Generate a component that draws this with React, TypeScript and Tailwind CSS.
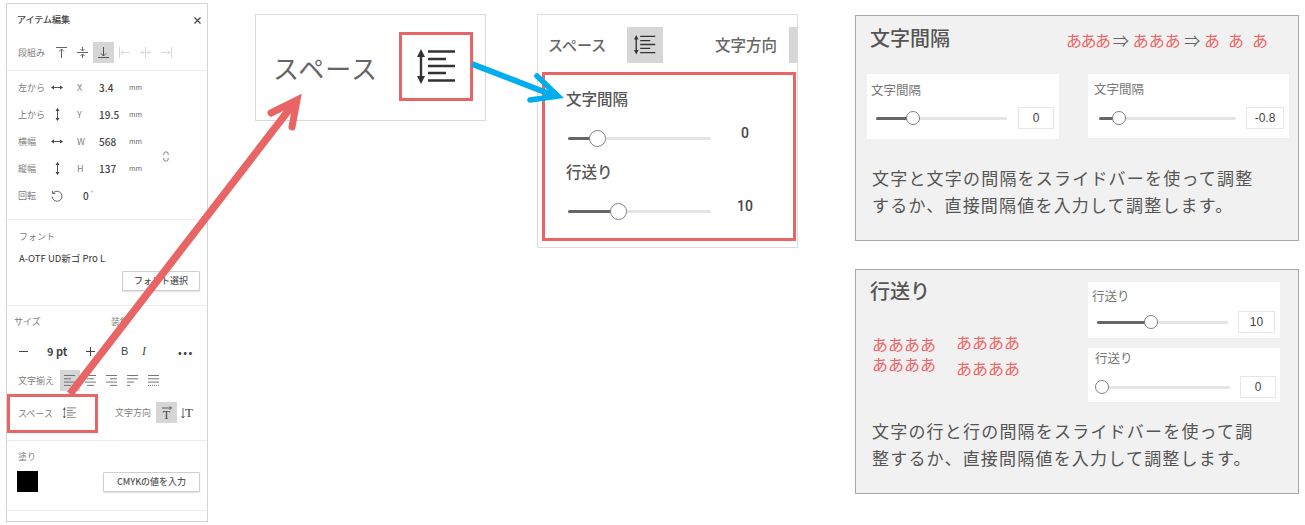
import React from "react";

const FONT = "font-['Noto_Sans_CJK_JP','Noto_Sans',sans-serif]";

function Svg({ w, h, children, className = "" }: { w: number; h: number; children: React.ReactNode; className?: string }) {
  return (
    <svg width={w} height={h} viewBox={`0 0 ${w} ${h}`} fill="none" stroke="currentColor" className={`shrink-0 ${className}`}>
      {children}
    </svg>
  );
}

function ArrowsH({ w = 12 }: { w?: number }) {
  return (
    <Svg w={w} h={7}>
      <path d={`M2 3.5H${w - 2}`} strokeWidth="0.9" />
      <path d="M0 3.5L3 1.5V5.5Z" fill="currentColor" stroke="none" />
      <path d={`M${w} 3.5L${w - 3} 1.5V5.5Z`} fill="currentColor" stroke="none" />
    </Svg>
  );
}

function ArrowsV({ h = 13 }: { h?: number }) {
  return (
    <Svg w={7} h={h}>
      <path d={`M3.5 2V${h - 2}`} strokeWidth="0.9" />
      <path d="M3.5 0L1.5 3H5.5Z" fill="currentColor" stroke="none" />
      <path d={`M3.5 ${h}L1.5 ${h - 3}H5.5Z`} fill="currentColor" stroke="none" />
    </Svg>
  );
}

function VAlign({ kind }: { kind: "top" | "mid" | "bottom" }) {
  return (
    <Svg w={13} h={13}>
      {kind === "top" && <path d="M1 1.5H12M6.5 12V3M4 5.5L6.5 3L9 5.5" strokeWidth="0.9" />}
      {kind === "mid" && <path d="M1 6.5H12M6.5 1V4.5M4.5 3L6.5 5L8.5 3M6.5 12V8.5M4.5 10L6.5 8L8.5 10" strokeWidth="0.9" />}
      {kind === "bottom" && <path d="M1 11.5H12M6.5 1V10M4 7.5L6.5 10L9 7.5" strokeWidth="0.9" />}
    </Svg>
  );
}

function HAlign({ kind }: { kind: "left" | "mid" | "right" }) {
  return (
    <Svg w={13} h={13}>
      {kind === "left" && <path d="M1.5 1V12M12 6.5H3M5.5 4L3 6.5L5.5 9" strokeWidth="0.9" />}
      {kind === "mid" && <path d="M6.5 1V12M1 6.5H4.5M3 4.5L5 6.5L3 8.5M12 6.5H8.5M10 4.5L8 6.5L10 8.5" strokeWidth="0.9" />}
      {kind === "right" && <path d="M11.5 1V12M1 6.5H10M7.5 4L10 6.5L7.5 9" strokeWidth="0.9" />}
    </Svg>
  );
}

function TextLines({ lines, dotted }: { lines: [number, number][]; dotted?: boolean }) {
  return (
    <Svg w={12} h={11}>
      {lines.map(([a, b], i) => (
        <path
          key={i}
          d={`M${a} ${0.5 + i * 3.3}H${b}`}
          strokeWidth="0.9"
          strokeDasharray={dotted && i === lines.length - 1 ? "1 1" : undefined}
        />
      ))}
    </Svg>
  );
}

function LineSpacing({ scale, stroke }: { scale: number; stroke: number }) {
  return (
    <svg width={39 * scale} height={35 * scale} viewBox="0 0 39 35" fill="none" stroke="currentColor" className="shrink-0">
      <path d="M4 6V29" strokeWidth={stroke} />
      <path d="M4 0L0 8H8Z" fill="currentColor" stroke="none" />
      <path d="M4 35L0 27H8Z" fill="currentColor" stroke="none" />
      <path d="M11 2.5H38M11 10H29M11 17H38M11 24H29M11 31.5H38" strokeWidth={stroke} />
    </svg>
  );
}

function Label({ children, className = "" }: { children: React.ReactNode; className?: string }) {
  return <span className={`text-[9px] leading-[14px] text-[#808080] whitespace-nowrap ${className}`}>{children}</span>;
}

function PosRow({ label, icon, axis, value, unit = "mm" }: { label: string; icon: React.ReactNode; axis: string; value: string; unit?: string }) {
  return (
    <div className="flex h-[27px] items-center">
      <Label className="w-[30px]">{label}</Label>
      <span className="flex w-[18px] justify-center text-[#444]">{icon}</span>
      <span className="ml-[11px] w-[22px] text-[9px] text-[#808080]">{axis}</span>
      <span className="w-[30px] text-[10px] font-medium text-[#444]">{value}</span>
      <span className="text-[7px] text-[#666]">{unit}</span>
    </div>
  );
}

function OutlineButton({ children, className = "" }: { children: React.ReactNode; className?: string }) {
  return (
    <div className={`flex h-[20px] items-center justify-center rounded-[1px] border border-[#cfcfcf] bg-white text-[9px] font-medium text-[#555] shadow-[0_1px_1px_rgba(0,0,0,0.12)] ${className}`}>
      {children}
    </div>
  );
}

function Panel() {
  return (
    <div className="absolute left-[6px] top-[3px] flex h-[519px] w-[202px] flex-col border border-[#d4d4d4] bg-white">
      <div className="h-[67px] border-b border-[#ececec]">
        <div className="flex h-[32px] items-center justify-between pl-[10px] pr-[5px]">
          <span className="text-[9px] font-medium leading-[14px] text-[#444]">アイテム編集</span>
          <span className="flex w-[10px] justify-center text-[#444]">
            <Svg w={7} h={7}>
              <path d="M0.5 0.5L6.5 6.5M6.5 0.5L0.5 6.5" strokeWidth="1.2" />
            </Svg>
          </span>
        </div>
        <div className="mt-[6px] flex h-[21px] items-center pl-[11px]">
          <Label className="w-[33px]">段組み</Label>
          <span className="flex w-[21px] justify-center text-[#555]"><VAlign kind="top" /></span>
          <span className="flex w-[21px] justify-center text-[#555]"><VAlign kind="mid" /></span>
          <span className="flex h-[21px] w-[21px] items-center justify-center bg-[#d6d6d6] text-[#444]"><VAlign kind="bottom" /></span>
          <span className="flex w-[21px] justify-center text-[#d2d2d2]"><HAlign kind="left" /></span>
          <span className="flex w-[21px] justify-center text-[#d2d2d2]"><HAlign kind="mid" /></span>
          <span className="flex w-[21px] justify-center text-[#d2d2d2]"><HAlign kind="right" /></span>
        </div>
      </div>

      <div className="flex h-[149px] border-b border-[#ececec] pl-[11px] pt-[3px]">
        <div className="w-[145px] shrink-0">
          <PosRow label="左から" icon={<ArrowsH />} axis="X" value="3.4" />
          <PosRow label="上から" icon={<ArrowsV />} axis="Y" value="19.5" />
          <PosRow label="横幅" icon={<ArrowsH />} axis="W" value="568" />
          <PosRow label="縦幅" icon={<ArrowsV />} axis="H" value="137" />
          <div className="flex h-[27px] items-center">
            <Label className="w-[30px]">回転</Label>
            <span className="flex w-[18px] justify-center text-[#555]">
              <Svg w={12} h={12}>
                <path d="M2.2 3A5 5 0 1 1 1 6.5" strokeWidth="0.9" />
                <path d="M1.5 0.8V3.4H4.2" strokeWidth="0.9" />
              </Svg>
            </span>
            <span className="ml-[17px] text-[10px] font-medium text-[#444]">0</span>
            <span className="mb-[5px] ml-[2px] text-[7px] text-[#666]">°</span>
          </div>
        </div>
        <span className="mt-[77px] text-[#666]">
          <Svg w={6} h={11}>
            <path d="M0.8 4V3A2.2 2.2 0 0 1 5.2 3V4M0.8 7V8A2.2 2.2 0 0 0 5.2 8V7" strokeWidth="0.8" />
          </Svg>
        </span>
      </div>

      <div className="flex h-[86px] flex-col border-b border-[#ececec] pl-[12px] pr-[7px] pt-[10px]">
        <Label>フォント</Label>
        <span className="mt-[7px] text-[9.5px] font-normal leading-[14px] text-[#333]">A-OTF UD新ゴ Pro L</span>
        <OutlineButton className="mt-[6px] w-[78px] self-end">フォント選択</OutlineButton>
      </div>

      <div className="h-[135px] border-b border-[#ececec] pt-[9px]">
        <div className="flex pl-[7px]">
          <Label className="w-[97px]">サイズ</Label>
          <Label>装飾</Label>
        </div>
        <div className="mt-[15px] flex h-[14px] items-center text-[#444]">
          <span className="ml-[12px] w-[28px]">
            <Svg w={9} h={9}><path d="M0 4.5H9" strokeWidth="1" /></Svg>
          </span>
          <span className="w-[39px] text-[11px] font-bold">9 pt</span>
          <span className="w-[35px]">
            <Svg w={9} h={9}><path d="M0 4.5H9M4.5 0V9" strokeWidth="1" /></Svg>
          </span>
          <span className="w-[21px] font-['Liberation_Sans',sans-serif] text-[11px]">B</span>
          <span className="w-[36px] font-['Liberation_Serif',serif] text-[12px] italic">I</span>
          <span className="text-[10px] font-bold tracking-[1.5px]">•••</span>
        </div>
        <div className="mt-[12px] flex h-[21px] items-center pl-[11px] text-[#666]">
          <Label className="w-[42px]">文字揃え</Label>
          <span className="flex h-[21px] w-[20px] items-center justify-center bg-[#d6d6d6]"><TextLines lines={[[0, 11], [0, 7], [0, 11], [0, 7]]} /></span>
          <span className="flex w-[21px] justify-center"><TextLines lines={[[0, 11], [2, 9], [0, 11], [2, 9]]} /></span>
          <span className="flex w-[21px] justify-center"><TextLines lines={[[0, 11], [4, 11], [0, 11], [4, 11]]} /></span>
          <span className="flex w-[21px] justify-center"><TextLines lines={[[0, 11], [0, 11], [0, 7], [0, 3]]} /></span>
          <span className="flex w-[21px] justify-center"><TextLines lines={[[0, 11], [0, 11], [0, 11], [0, 11]]} dotted /></span>
        </div>
        <div className="mt-[11px] flex h-[21px] items-center pl-[11px] text-[#555]">
          <Label className="mt-[3px] w-[44px] shrink-0">スペース</Label>
          <span className="flex w-[16px] shrink-0 justify-center"><LineSpacing scale={0.34} stroke={2.2} /></span>
          <Label className="ml-[37px] w-[41px] shrink-0">文字方向</Label>
          <span className="flex h-[21px] w-[21px] shrink-0 flex-col items-center justify-center bg-[#d6d6d6] text-[#444]">
            <Svg w={10} h={4}><path d="M0 2H9.5M7.5 0.5L9.5 2L7.5 3.5" strokeWidth="0.8" /></Svg>
            <span className="font-['Liberation_Serif',serif] text-[12px] leading-[10px]">T</span>
          </span>
          <span className="ml-[4px] flex items-center text-[#444]">
            <Svg w={4} h={12}><path d="M2 1V11M0.5 9L2 11L3.5 9" strokeWidth="0.8" /></Svg>
            <span className="font-['Liberation_Serif',serif] text-[13px] leading-none">T</span>
          </span>
        </div>
      </div>

      <div className="h-[70px] border-b border-[#ececec] pl-[10px] pr-[7px] pt-[9px]">
        <Label className="ml-[1px] block">塗り</Label>
        <div className="mt-[7px] flex items-center justify-between">
          <div className="h-[21px] w-[21px] bg-black" />
          <OutlineButton className="w-[97px]">CMYKの値を入力</OutlineButton>
        </div>
      </div>
    </div>
  );
}

function Slider({ width, pos, thumb }: { width: number; pos: number; thumb: number }) {
  return (
    <div className="relative flex shrink-0 items-center" style={{ width, height: thumb }}>
      <div className="h-[3px] w-full rounded-full bg-[#e4e4e4]" />
      <div className="absolute left-0 h-[3px] rounded-full bg-[#666]" style={{ width: pos }} />
      <div
        className="absolute rounded-full border-[1.5px] border-[#808080] bg-white"
        style={{ left: pos - thumb / 2, width: thumb, height: thumb }}
      />
    </div>
  );
}

function MiniBox({
  className,
  label,
  trackClass,
  width,
  pos,
  value,
  inputClass,
}: {
  className: string;
  label: string;
  trackClass: string;
  width: number;
  pos: number;
  value: string;
  inputClass: string;
}) {
  return (
    <div className={`flex flex-col bg-white ${className}`}>
      <span className="text-[12.5px] leading-[16px] text-[#777]">{label}</span>
      <div className={`flex items-center ${trackClass}`}>
        <Slider width={width} pos={pos} thumb={14} />
        <div className={`flex h-[22px] items-center justify-center border border-[#e6e6e6] font-['Liberation_Sans',sans-serif] text-[12px] text-[#444] ${inputClass}`}>
          {value}
        </div>
      </div>
    </div>
  );
}

function Paragraph({ lines, className = "" }: { lines: string[]; className?: string }) {
  return (
    <p className={`pl-[16px] text-[17px] leading-[27px] tracking-[1.2px] whitespace-nowrap text-[#555] ${className}`}>
      {lines.map((l) => (
        <span className="block" key={l}>{l}</span>
      ))}
    </p>
  );
}

export default function App() {
  return (
    <div className={`relative h-[525px] w-[1305px] overflow-hidden bg-white ${FONT}`}>
      <Panel />

      <div className="absolute left-[255px] top-[14px] flex h-[107px] w-[231px] items-center border border-[#d9d9d9] bg-white pl-[17px]">
        <span className="w-[126px] shrink-0 text-[26px] font-normal leading-none tracking-[1px] whitespace-nowrap text-[#666]">スペース</span>
        <div className="mt-[-3px] flex h-[69px] w-[74px] shrink-0 items-center justify-center border-[3px] border-[#e96464] text-[#333]">
          <LineSpacing scale={1} stroke={2.4} />
        </div>
      </div>

      <div className="absolute left-[537px] top-[14px] h-[234px] w-[261px] overflow-hidden border border-[#dcdcdc] bg-white">
        <div className="mt-[12px] flex h-[36px] items-center pl-[10px] whitespace-nowrap">
          <span className="w-[79px] shrink-0 text-[15px] font-medium text-[#666]">スペース</span>
          <span className="flex h-[36px] w-[36px] shrink-0 items-center justify-center bg-[#d6d6d6] text-[#333]">
            <LineSpacing scale={0.56} stroke={2.4} />
          </span>
          <span className="ml-[52px] w-[74px] shrink-0 text-[15.5px] font-medium text-[#666]">文字方向</span>
          <span className="h-[36px] w-[20px] shrink-0 bg-[#d6d6d6]" />
        </div>
        <div className="ml-[4px] mt-[9px] h-[169px] w-[254px] border-[3px] border-[#e96464] pl-[23px] pt-[12px]">
          <div className="ml-[-2px] text-[15.5px] font-medium leading-[22px] text-[#555]">文字間隔</div>
          <div className="mt-[21px] flex h-[18px] items-start">
            <Slider width={143} pos={29} thumb={17} />
            <span className="mt-[-6px] w-[68px] text-center font-['Roboto',sans-serif] text-[14px] font-medium leading-[18px] text-[#444]">0</span>
          </div>
          <div className="ml-[-2px] mt-[12px] text-[15.5px] font-medium leading-[22px] text-[#555]">行送り</div>
          <div className="mt-[21px] flex h-[18px] items-start">
            <Slider width={143} pos={50} thumb={17} />
            <span className="mt-[-6px] w-[68px] text-center font-['Roboto',sans-serif] text-[14px] font-medium leading-[18px] text-[#444]">10</span>
          </div>
        </div>
      </div>

      <div className="absolute left-[855px] top-[15px] h-[226px] w-[444px] border border-[#a8a8a8] bg-[#f1f1f1]">
        <div className="mt-[7px] flex h-[30px] items-center pl-[14px] whitespace-nowrap">
          <span className="w-[196px] shrink-0 text-[20px] font-medium leading-[30px] text-[#555]">文字間隔</span>
          <span className="mt-[4px] text-[16px] leading-[24px] text-[#ee6464]">
            <span className="tracking-[-1.5px]">あああ</span>
            <span className="text-[#666]"> ⇒ </span>
            <span>あああ</span>
            <span className="text-[#666]"> ⇒ </span>
            <span className="tracking-[8px]">あああ</span>
          </span>
        </div>
        <div className="mt-[21px] flex items-start gap-[29px] pl-[11px]">
          <MiniBox
            className="h-[65px] w-[192px] pl-[4px] pt-[8px]"
            label="文字間隔"
            trackClass="mt-[9px] pl-[5px]"
            width={131}
            pos={37}
            value="0"
            inputClass="ml-[11px] w-[36px]"
          />
          <MiniBox
            className="h-[64px] w-[201px] pl-[6px] pt-[7px]"
            label="文字間隔"
            trackClass="mt-[10px] pl-[5px]"
            width={137}
            pos={20}
            value="-0.8"
            inputClass="ml-[10px] w-[38px]"
          />
        </div>
        <Paragraph className="mt-[25px]" lines={["文字と文字の間隔をスライドバーを使って調整", "するか、直接間隔値を入力して調整します。"]} />
      </div>

      <div className="absolute left-[855px] top-[269px] h-[225px] w-[444px] border border-[#a8a8a8] bg-[#f1f1f1]">
        <div className="flex">
          <div className="w-[232px] shrink-0 pl-[14px] pt-[6px]">
            <div className="text-[20px] font-medium leading-[30px] text-[#555]">行送り</div>
            <div className="mt-[26px] flex pl-[2px] text-[16px] text-[#ee6464] whitespace-nowrap">
              <div className="w-[84px] pt-[2px] leading-[20px]">
                <div>ああああ</div>
                <div>ああああ</div>
              </div>
              <div className="mt-[-3px] leading-[26px]">
                <div>ああああ</div>
                <div>ああああ</div>
              </div>
            </div>
          </div>
          <div className="flex flex-col gap-[10px] pt-[12px]">
            <MiniBox
              className="h-[56px] w-[192px] pl-[4px] pt-[6px]"
              label="行送り"
              trackClass="mt-[7px] pl-[5px]"
              width={131}
              pos={54}
              value="10"
              inputClass="ml-[10px] w-[37px]"
            />
            <MiniBox
              className="h-[54px] w-[192px] pl-[7px] pt-[2px]"
              label="行送り"
              trackClass="mt-[10px] pl-[2px]"
              width={133}
              pos={5}
              value="0"
              inputClass="ml-[10px] w-[36px]"
            />
          </div>
        </div>
        <Paragraph className="mt-[15px]" lines={["文字の行と行の間隔をスライドバーを使って調", "整するか、直接間隔値を入力して調整します。"]} />
      </div>

      <div className="absolute left-[7px] top-[394px] h-[39px] w-[91px] border-[3px] border-[#e96464]" />

      <svg className="pointer-events-none absolute inset-0" width={1305} height={525} fill="none">
        <path d="M70 394L295 102" stroke="#e96464" strokeWidth="7.5" />
        <path d="M271 113L297 100L292 127" stroke="#e96464" strokeWidth="7" strokeLinecap="round" strokeLinejoin="miter" />
        <path d="M472 64L555 96" stroke="#00aeef" strokeWidth="6" />
        <path d="M537 76L558 96L530 100" stroke="#00aeef" strokeWidth="5.5" strokeLinecap="round" strokeLinejoin="miter" />
      </svg>
    </div>
  );
}
